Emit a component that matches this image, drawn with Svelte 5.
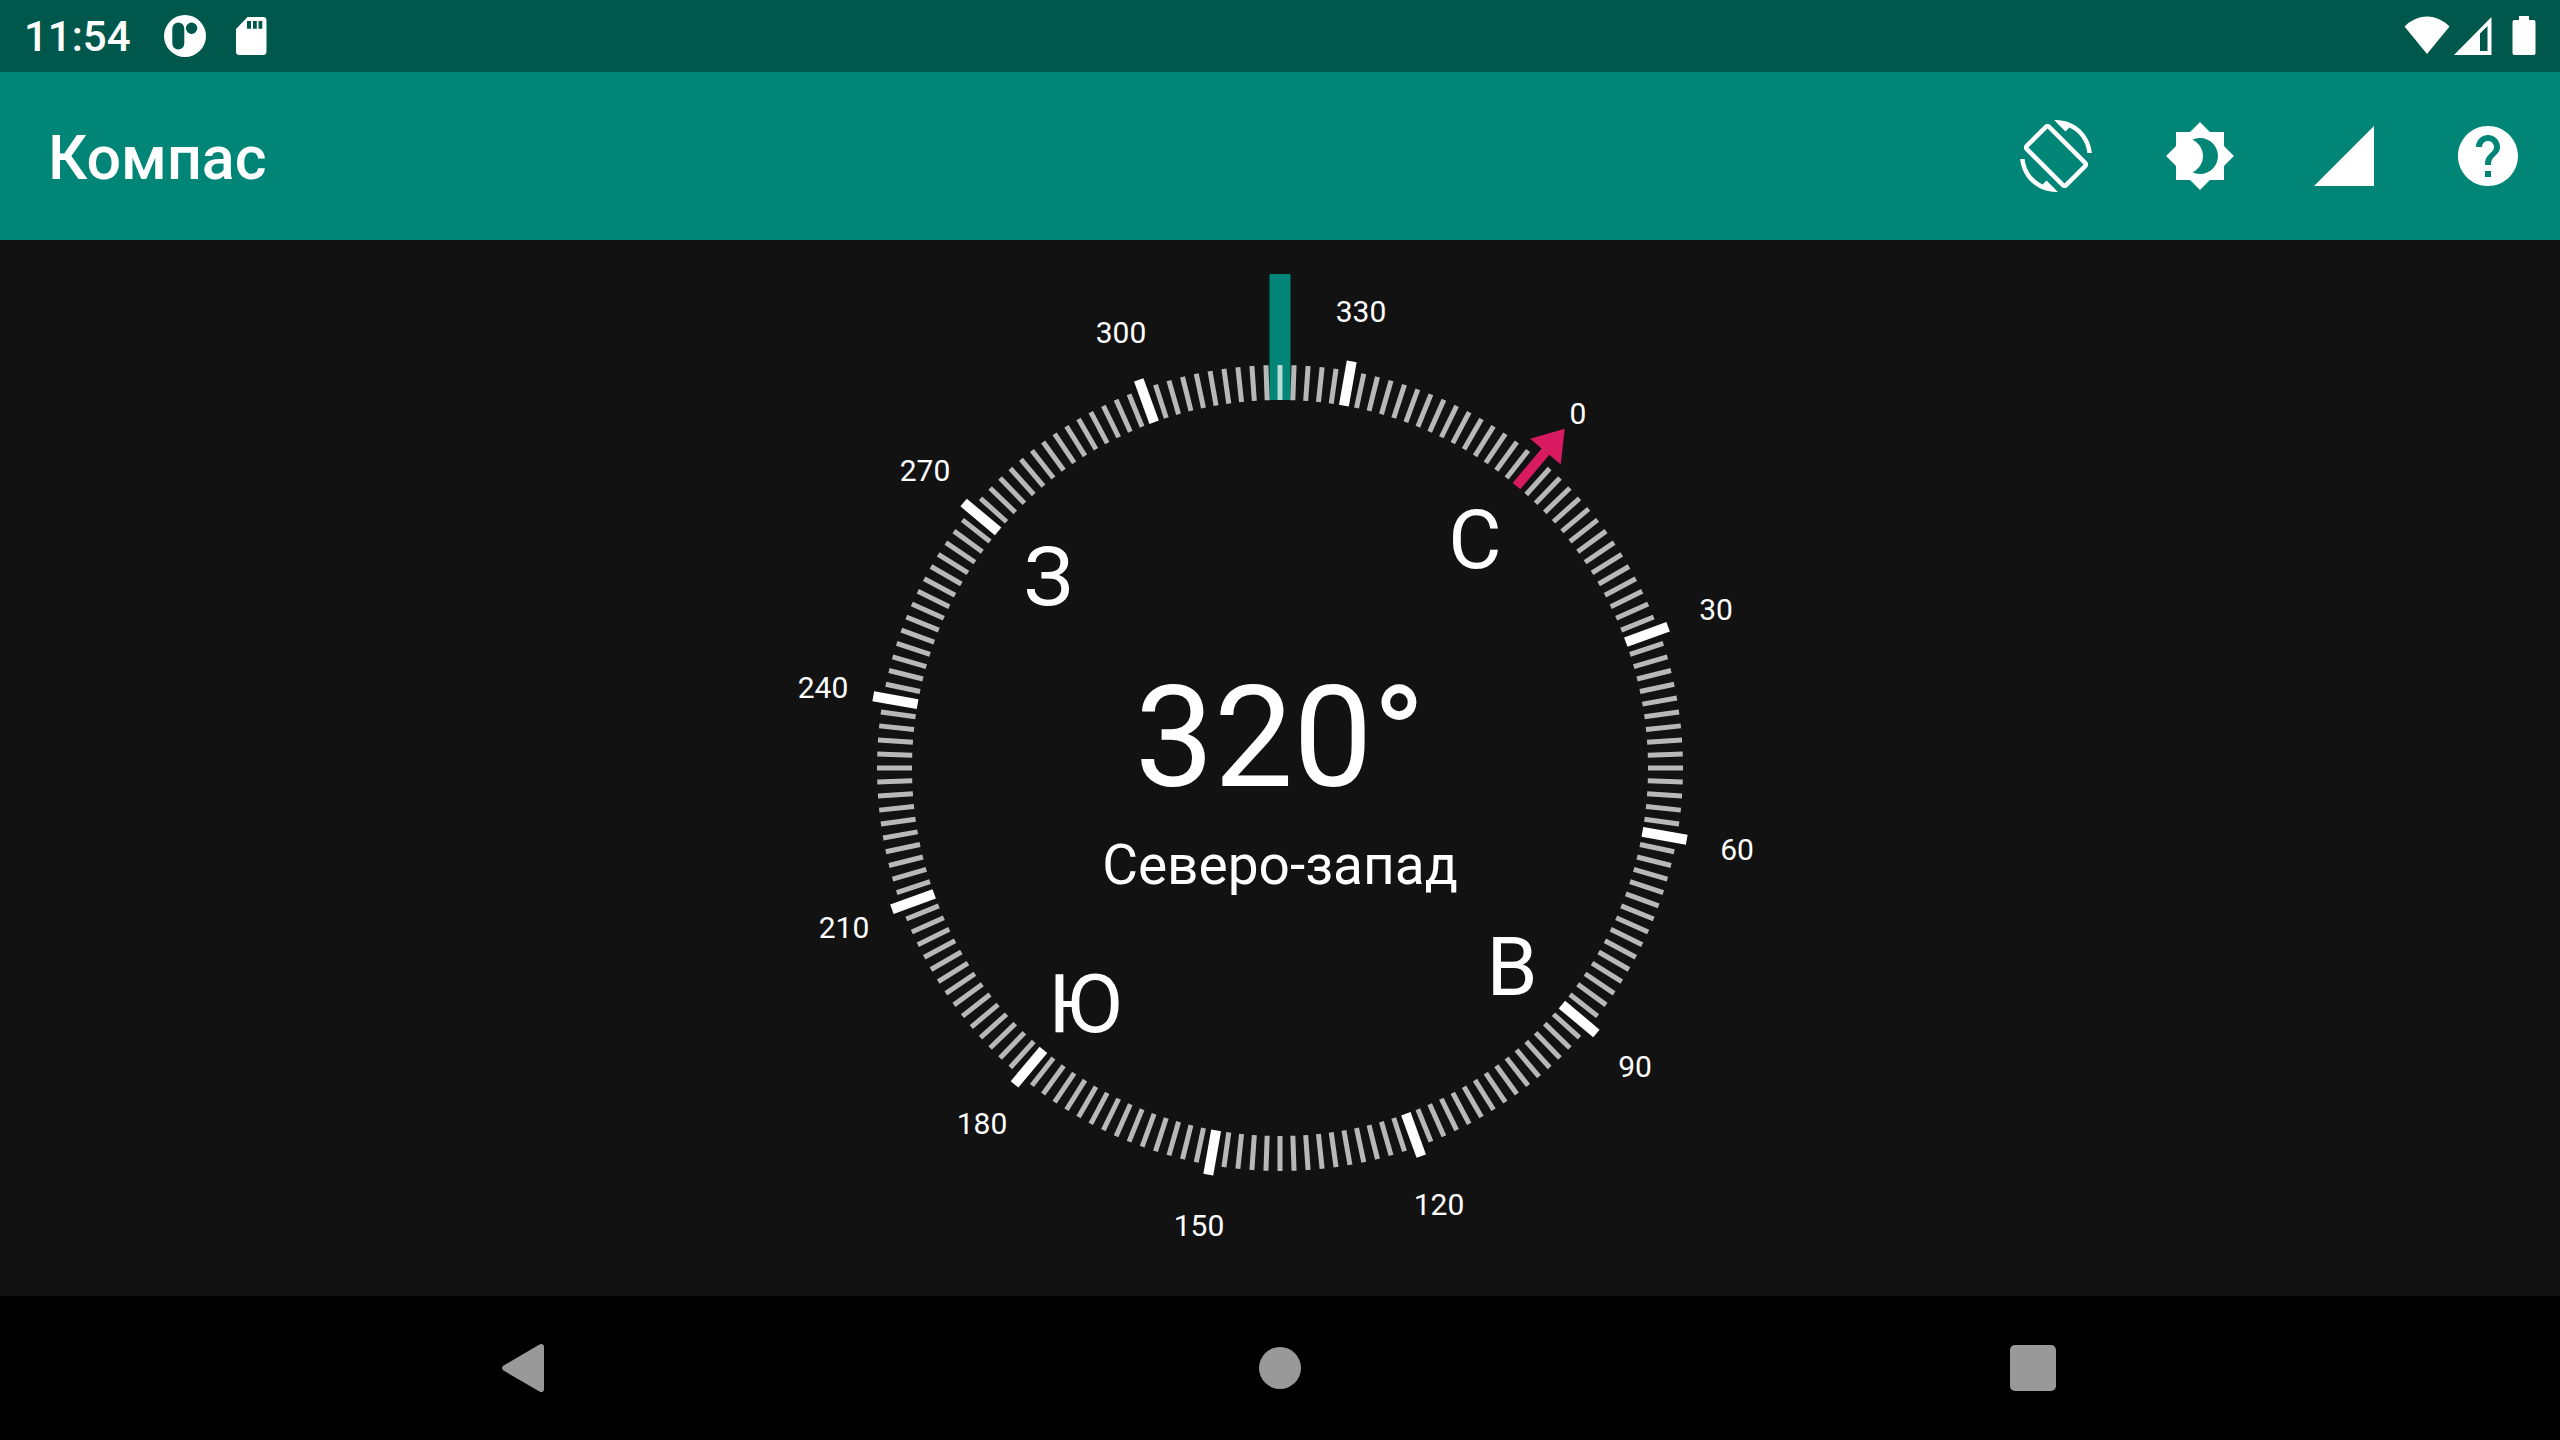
<script>
  const heading = 320;
  const direction = 'Северо-запад';

  const ticks = Array.from({ length: 180 }, (_, i) => i * 2)
    .filter((deg) => deg !== 0)
    .map((deg) => ({ angle: deg - heading, major: deg % 30 === 0 }));

  function place(deg, radius) {
    const a = ((deg - heading) * Math.PI) / 180;
    return { x: Math.round(Math.sin(a) * radius), y: Math.round(-Math.cos(a) * radius) };
  }

  const degreeLabels = Array.from({ length: 12 }, (_, i) => ({
    text: String(i * 30),
    ...place(i * 30, 464)
  }));

  const cardinals = ['С', 'В', 'Ю', 'З'].map((text, i) => ({ text, ...place(i * 90, 303) }));

  const actions = [
    {
      label: 'Поворот экрана',
      path: 'M16.48 2.52c3.27 1.55 5.61 4.72 5.97 8.48h1.5C23.44 4.84 18.29 0 12 0l-.66.03 3.81 3.81 1.33-1.32zm-6.25-.77c-.59-.59-1.54-.59-2.12 0L1.75 8.11c-.59.59-.59 1.54 0 2.12l12.02 12.02c.59.59 1.54.59 2.12 0l6.36-6.36c.59-.59.59-1.54 0-2.12L10.23 1.75zm4.6 19.44L2.81 9.17l6.36-6.36 12.02 12.02-6.36 6.36zm-7.31.29C4.25 19.94 1.91 16.76 1.55 13H.05C.56 19.16 5.71 24 12 24l.66-.03-3.81-3.81-1.33 1.32z'
    },
    {
      label: 'Ночной режим',
      path: 'M20 8.69V4h-4.69L12 .69 8.69 4H4v4.69L.69 12 4 15.31V20h4.69L12 23.31 15.31 20H20v-4.69L23.31 12 20 8.69zM12 18c-.89 0-1.74-.2-2.5-.55C11.56 16.5 13 14.42 13 12s-1.44-4.5-3.5-5.45C10.26 6.2 11.11 6 12 6c3.31 0 6 2.69 6 6s-2.69 6-6 6z'
    },
    { label: 'Точность датчика', path: 'M2 22h20V2z' },
    {
      label: 'Справка',
      path: 'M12 2C6.48 2 2 6.48 2 12s4.48 10 10 10 10-4.48 10-10S17.52 2 12 2zm1 17h-2v-2h2v2zm2.07-7.75l-.9.92C13.45 12.9 13 13.5 13 15h-2v-.5c0-1.1.45-2.1 1.17-2.83l1.24-1.26c.37-.36.59-.86.59-1.41 0-1.1-.9-2-2-2s-2 .9-2 2H8c0-2.21 1.79-4 4-4s4 1.79 4 4c0 .88-.36 1.68-.93 2.25z'
    }
  ];
</script>

<div class="screen">
  <div class="status">
    <div class="status-left">
      <time>11:54</time>
      <svg class="notice" viewBox="0 0 48 48" aria-hidden="true">
        <path
          fill-rule="evenodd"
          d="M24 3a21 21 0 1 0 0 42a21 21 0 1 0 0-42zM17.300 10.500a6 6 0 0 1 6 6v15a6 6 0 0 1-12 0v-15a6 6 0 0 1 6-6zM30.600 10.500a5.700 5.700 0 1 1 0 11.400a5.700 5.700 0 1 1 0-11.400z"
        />
      </svg>
      <svg class="notice" viewBox="0 0 48 48" aria-hidden="true">
        <path
          fill-rule="evenodd"
          d="M20.500 5H36a3.500 3.500 0 0 1 3.500 3.500v31a3.500 3.500 0 0 1-3.500 3.500H12.500a3.500 3.500 0 0 1-3.500-3.500V17zM20 9v7.700h4V9zM26 9v7.700h3.800V9zM31.500 9v7.700h3.800V9z"
        />
      </svg>
    </div>
    <div class="status-right">
      <svg class="wifi" viewBox="0 0 46 48" aria-hidden="true">
        <path d="M23 42L.5 14.500C6 9 14 4.500 23 4.500S40 9 45.500 14.500z" />
      </svg>
      <svg class="cell" viewBox="0 0 40 48" aria-hidden="true">
        <path fill-rule="evenodd" d="M1 43L38.500 5V43zM27 21.500V39H34.500V14z" />
      </svg>
      <svg class="battery" viewBox="0 0 24 48" aria-hidden="true">
        <path d="M7 4H17V8H21.500a2 2 0 0 1 2 2V41a2 2 0 0 1-2 2H2.500a2 2 0 0 1-2-2V10a2 2 0 0 1 2-2H7z" />
      </svg>
    </div>
  </div>

  <header>
    <h1>Компас</h1>
    <div class="actions">
      {#each actions as action}
        <button type="button" aria-label={action.label}>
          <svg viewBox="0 0 24 24" aria-hidden="true"><path d={action.path} /></svg>
        </button>
      {/each}
    </div>
  </header>

  <main>
    <svg class="compass" viewBox="-528 -528 1056 1056" role="img" aria-label="Компас">
      <rect class="pointer" x="-10.500" y="-494" width="21" height="126" />
      {#each ticks as tick}
        <line
          class={tick.major ? 'major' : 'minor'}
          y1={tick.major ? -413 : -403}
          y2="-368"
          transform="rotate({tick.angle})"
        />
      {/each}
      <path
        class="north"
        d="M0-443L20-413H5V-368H-5V-413H-20z"
        transform="rotate({-heading})"
      />
      {#each degreeLabels as label}
        <text class="degree" x={label.x} y={label.y} dy="11">{label.text}</text>
      {/each}
      {#each cardinals as label}
        <text class="cardinal" x={label.x} y={label.y} dy="32">{label.text}</text>
      {/each}
      <text class="heading" x="0" y="18">{heading}°</text>
      <text class="direction" x="0" y="116">{direction}</text>
    </svg>
  </main>

  <nav aria-label="Навигация">
    <button type="button" aria-label="Назад">
      <svg viewBox="0 0 80 80" aria-hidden="true">
        <path d="M52.500 16.500Q57 14.500 57 19.500V60.500Q57 65.500 52.500 63.500L16.500 42.500Q13.500 40 16.500 37.500z" />
      </svg>
    </button>
    <button type="button" aria-label="Домой">
      <svg viewBox="0 0 80 80" aria-hidden="true"><circle cx="40" cy="40" r="21" /></svg>
    </button>
    <button type="button" aria-label="Недавние">
      <svg viewBox="0 0 80 80" aria-hidden="true"><rect x="17" y="17" width="46" height="46" rx="5" /></svg>
    </button>
  </nav>
</div>

<style>
  :global(body) {
    margin: 0;
    background: #121212;
  }

  .screen {
    display: flex;
    flex-direction: column;
    height: 100vh;
    background: #121212;
    color: #fff;
    font-family: Roboto, 'Noto Sans', sans-serif;
  }

  svg {
    display: block;
    fill: currentColor;
  }

  button {
    display: flex;
    align-items: center;
    justify-content: center;
    padding: 0;
    border: 0;
    background: none;
    color: inherit;
    cursor: pointer;
  }

  .status {
    display: flex;
    align-items: center;
    justify-content: space-between;
    height: 72px;
    padding: 0 24px;
    background: #00574b;
  }

  .status-left,
  .status-right {
    display: flex;
    align-items: center;
  }

  .status-left {
    gap: 18px;
  }

  time {
    margin-right: 12px;
    padding-top: 2px;
    font-size: 42px;
    font-weight: 500;
    line-height: 48px;
  }

  .notice {
    width: 48px;
    height: 48px;
  }

  .wifi {
    width: 46px;
    height: 48px;
  }

  .cell {
    width: 40px;
    height: 48px;
    margin: 0 19px 0 3px;
  }

  .battery {
    width: 24px;
    height: 48px;
  }

  header {
    display: flex;
    align-items: center;
    justify-content: space-between;
    height: 168px;
    padding-left: 48px;
    background: #008577;
  }

  h1 {
    margin: 0;
    padding-top: 4px;
    font-size: 61px;
    font-weight: 500;
    line-height: 72px;
  }

  .actions {
    display: flex;
  }

  .actions button {
    width: 144px;
    height: 144px;
  }

  .actions svg {
    width: 72px;
    height: 72px;
  }

  main {
    display: flex;
    flex: 1;
    min-height: 0;
  }

  .compass {
    flex: 1;
    min-width: 0;
    height: 100%;
  }

  .pointer {
    fill: #008577;
  }

  .minor {
    stroke: rgba(255, 255, 255, 0.7);
    stroke-width: 5px;
  }

  .major {
    stroke: #fff;
    stroke-width: 10px;
  }

  .north {
    fill: #d81b60;
  }

  text {
    text-anchor: middle;
  }

  .degree {
    font-size: 30px;
  }

  .cardinal {
    font-size: 82px;
  }

  .heading {
    font-size: 141px;
  }

  .direction {
    font-size: 55px;
  }

  nav {
    display: grid;
    grid-template-columns: repeat(3, 1fr);
    height: 144px;
    padding: 0 150px;
    background: #000;
    color: #999;
  }

  nav svg {
    width: 80px;
    height: 80px;
  }
</style>
